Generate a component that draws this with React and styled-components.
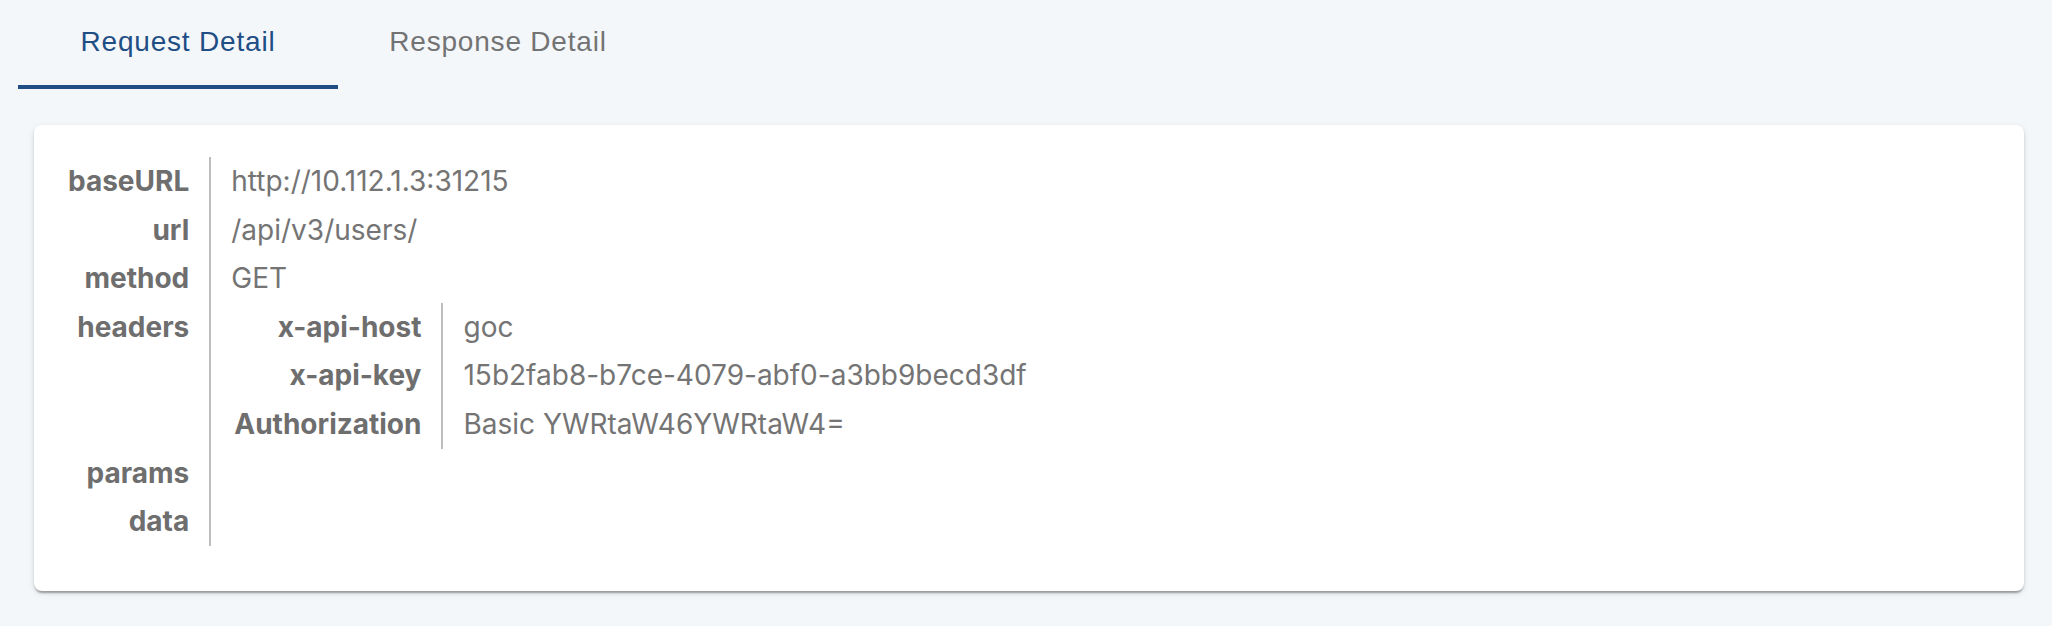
import React, { useState } from 'react';
import styled, { createGlobalStyle } from 'styled-components';

const GlobalStyle = createGlobalStyle`
	html, body {
		margin: 0;
		padding: 0;
		background: #f4f7fa;
	}
	* {
		box-sizing: border-box;
	}
`;

const request = {
	baseURL: 'http://10.112.1.3:31215',
	url: '/api/v3/users/',
	method: 'GET',
	headers: {
		'x-api-host': 'goc',
		'x-api-key': '15b2fab8-b7ce-4079-abf0-a3bb9becd3df',
		Authorization: 'Basic YWRtaW46YWRtaW4=',
	},
	params: null,
	data: null,
};

function DetailTable({ entries }) {
	return (
		<Table>
			{Object.entries(entries).map(([key, value]) => (
				<React.Fragment key={key}>
					<Label>{key}</Label>
					{value && typeof value === 'object' ? (
						<Value $nested>
							<DetailTable entries={value} />
						</Value>
					) : (
						<Value>{value}</Value>
					)}
				</React.Fragment>
			))}
		</Table>
	);
}

function App() {
	const [tab, setTab] = useState(0);

	return (
		<Page>
			<GlobalStyle />
			<TabBar>
				<Tab $active={tab === 0} onClick={() => setTab(0)}>
					Request Detail
				</Tab>
				<Tab $active={tab === 1} onClick={() => setTab(1)}>
					Response Detail
				</Tab>
			</TabBar>
			<Card>{tab === 0 && <DetailTable entries={request} />}</Card>
		</Page>
	);
}

const Page = styled.div`
	min-height: 626px;
	background: #f4f7fa;
	overflow: hidden;
`;

const TabBar = styled.div`
	display: flex;
	padding-left: 18px;
`;

const Tab = styled.button`
	width: 320px;
	height: 89px;
	padding: 24px 0 0;
	margin: 0;
	border: none;
	border-bottom: 4px solid ${(p) => (p.$active ? '#1f4e85' : 'transparent')};
	background: transparent;
	color: ${(p) => (p.$active ? '#1f4e85' : '#737373')};
	font-family: 'Liberation Sans', Arial, sans-serif;
	font-size: 28px;
	line-height: 35px;
	letter-spacing: 0.8px;
	cursor: pointer;
	display: flex;
	justify-content: center;
	align-items: flex-start;
`;

const Card = styled.div`
	margin: 36px 28px 0 34px;
	padding: 32px 34px 45px;
	background: #fff;
	border-radius: 8px;
	box-shadow: 0 4px 2px -2px rgba(0, 0, 0, 0.2), 0 2px 2px 0 rgba(0, 0, 0, 0.14),
		0 2px 6px 0 rgba(0, 0, 0, 0.12);
`;

const Table = styled.div`
	display: grid;
	grid-template-columns: auto 1fr;
	font-family: Inter, 'Noto Sans', sans-serif;
	font-size: 28px;
	line-height: 38.6px;
`;

const Label = styled.div`
	padding: 5px 20px 5px 0;
	text-align: right;
	font-weight: 700;
	color: #6e6e6e;
	border-right: 2px solid #bdbdbd;
	white-space: nowrap;
`;

const Value = styled.div`
	padding: ${(p) => (p.$nested ? '0 0 0 23px' : '5px 0 5px 20px')};
	color: #747474;
	white-space: nowrap;
`;

export default App;
